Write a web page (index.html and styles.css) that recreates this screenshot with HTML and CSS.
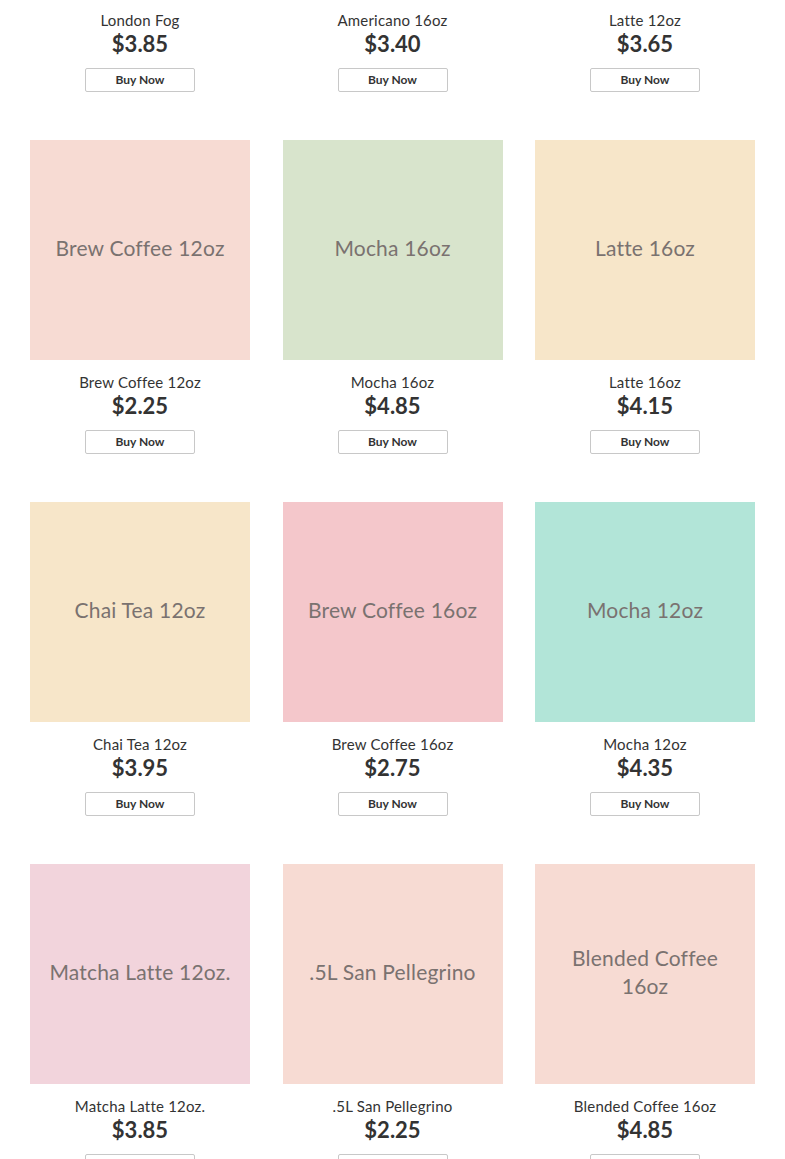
FILE: index.html
```html
<!DOCTYPE html>
<html lang="en">
<head>
  <meta charset="UTF-8" />
  <title>Menu</title>
  <link rel="stylesheet" href="styles.css">
</head>
<body>
  <div class="menu-grid">
    <div class="product">
      <div class="tile tile-fog">London Fog</div>
      <div class="name">London Fog</div>
      <div class="price">$3.85</div>
      <button class="buy">Buy Now</button>
    </div>
    <div class="product">
      <div class="tile tile-americano">Americano 16oz</div>
      <div class="name">Americano 16oz</div>
      <div class="price">$3.40</div>
      <button class="buy">Buy Now</button>
    </div>
    <div class="product">
      <div class="tile tile-latte">Latte 12oz</div>
      <div class="name">Latte 12oz</div>
      <div class="price">$3.65</div>
      <button class="buy">Buy Now</button>
    </div>

    <div class="product">
      <div class="tile tile-peach">Brew Coffee 12oz</div>
      <div class="name">Brew Coffee 12oz</div>
      <div class="price">$2.25</div>
      <button class="buy">Buy Now</button>
    </div>
    <div class="product">
      <div class="tile tile-sage">Mocha 16oz</div>
      <div class="name">Mocha 16oz</div>
      <div class="price">$4.85</div>
      <button class="buy">Buy Now</button>
    </div>
    <div class="product">
      <div class="tile tile-cream">Latte 16oz</div>
      <div class="name">Latte 16oz</div>
      <div class="price">$4.15</div>
      <button class="buy">Buy Now</button>
    </div>

    <div class="product">
      <div class="tile tile-cream">Chai Tea 12oz</div>
      <div class="name">Chai Tea 12oz</div>
      <div class="price">$3.95</div>
      <button class="buy">Buy Now</button>
    </div>
    <div class="product">
      <div class="tile tile-rose">Brew Coffee 16oz</div>
      <div class="name">Brew Coffee 16oz</div>
      <div class="price">$2.75</div>
      <button class="buy">Buy Now</button>
    </div>
    <div class="product">
      <div class="tile tile-mint">Mocha 12oz</div>
      <div class="name">Mocha 12oz</div>
      <div class="price">$4.35</div>
      <button class="buy">Buy Now</button>
    </div>

    <div class="product">
      <div class="tile tile-blush">Matcha Latte 12oz.</div>
      <div class="name">Matcha Latte 12oz.</div>
      <div class="price">$3.85</div>
      <button class="buy">Buy Now</button>
    </div>
    <div class="product">
      <div class="tile tile-peach">.5L San Pellegrino</div>
      <div class="name">.5L San Pellegrino</div>
      <div class="price">$2.25</div>
      <button class="buy">Buy Now</button>
    </div>
    <div class="product">
      <div class="tile tile-peach">Blended Coffee 16oz</div>
      <div class="name">Blended Coffee 16oz</div>
      <div class="price">$4.85</div>
      <button class="buy">Buy Now</button>
    </div>
  </div>
</body>
</html>
```

FILE: styles.css
```css
body {
  margin: 0;
  font-family: Lato, "Open Sans", sans-serif;
  background: #fff;
  color: #333;
}

.menu-grid {
  display: grid;
  grid-template-columns: repeat(3, 220px);
  justify-content: space-between;
  row-gap: 48px;
  padding: 0 30px;
  margin-top: -222px;
}

.product {
  display: flex;
  flex-direction: column;
  align-items: center;
}

.tile {
  width: 220px;
  height: 220px;
  box-sizing: border-box;
  padding: 0 16px 5px;
  display: flex;
  align-items: center;
  justify-content: center;
  text-align: center;
  font-size: 21px;
  line-height: 28px;
  letter-spacing: 0.2px;
  color: #7a7270;
}

.tile-fog { background-color: #e3e0ea; }
.tile-americano { background-color: #d8e4cc; }
.tile-latte { background-color: #f7e6c8; }
.tile-peach { background-color: #f7dbd3; }
.tile-sage { background-color: #d8e4cc; }
.tile-cream { background-color: #f7e6c9; }
.tile-rose { background-color: #f4c7cb; }
.tile-mint { background-color: #b2e5d8; }
.tile-blush { background-color: #f2d4dc; }

.name {
  margin-top: 12px;
  font-size: 15px;
  line-height: 20px;
  letter-spacing: 0.2px;
  color: #333;
}

.price {
  margin-top: 2px;
  font-size: 22px;
  line-height: 24px;
  font-weight: 700;
  color: #333;
}

.buy {
  margin-top: 12px;
  width: 110px;
  height: 24px;
  padding: 0 0 2px;
  background: #fff;
  border: 1px solid #c8c8c8;
  border-radius: 2px;
  font-family: inherit;
  font-size: 12px;
  font-weight: 700;
  color: #333;
}
```
